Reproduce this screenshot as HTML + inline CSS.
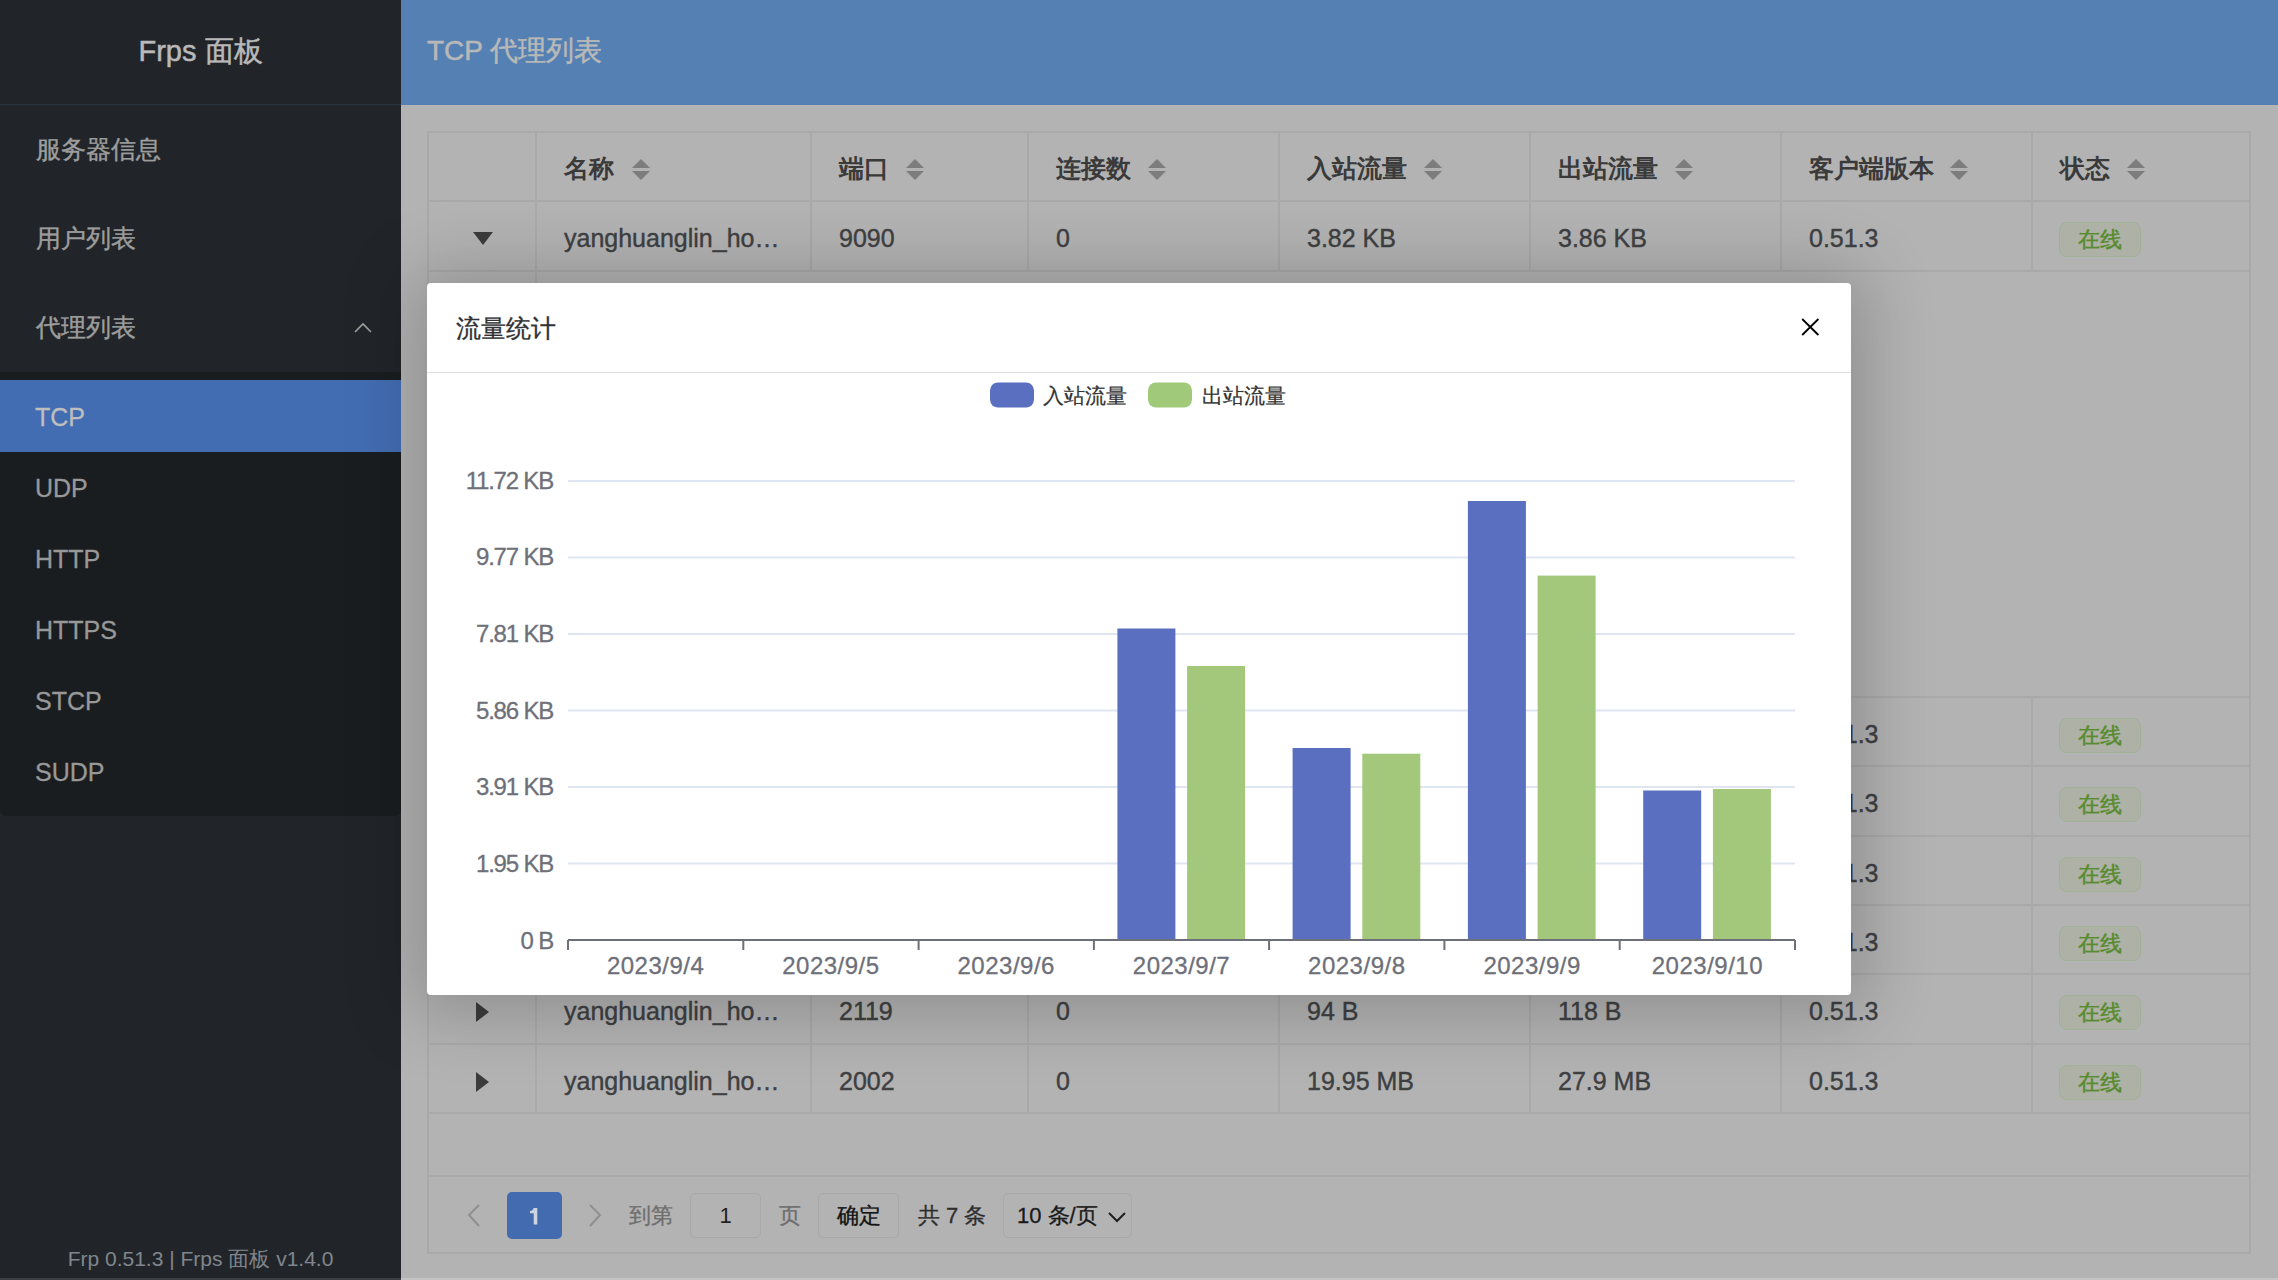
<!DOCTYPE html>
<html><head><meta charset="utf-8">
<style>
*{box-sizing:border-box;margin:0;padding:0}
html,body{width:2278px;height:1280px;overflow:hidden;background:#b3b3b3;font-family:"Liberation Sans",sans-serif}
.abs{position:absolute}
#side{left:0;top:0;width:401px;height:1280px;background:#212529}
#logo{left:0;top:0;width:401px;height:105px;border-bottom:1px solid #283440;color:#b9b9b9;font-size:29px;text-align:center;line-height:102px;-webkit-text-stroke:0.5px #b9b9b9}
.mi{left:36px;color:#9d9d9d;font-size:25px;line-height:30px;-webkit-text-stroke:0.4px #9d9d9d}
#sub{left:0;top:372px;width:401px;height:444px;background:#1a1d20;border-radius:0 0 6px 6px}
#act{left:0;top:380px;width:401px;height:72px;background:#436db3}
.si{left:35px;color:#989898;font-size:25px;line-height:30px;-webkit-text-stroke:0.3px currentColor}
#foot{left:0;top:1244px;width:401px;text-align:center;color:#80858d;font-size:21px;line-height:30px}
#hdr{left:401px;top:0;width:1877px;height:105px;background:#5580b3;color:#b8b8b8;font-size:28px;line-height:102px;-webkit-text-stroke:0.5px #b8b8b8;padding-left:26px}
#tbl{left:427px;top:131px;width:1824px;height:1123px;border:2px solid #a9a9a9}
.hl{height:2px;background:#a9a9a9;left:427px;width:1824px}
.vl{width:2px;background:#a9a9a9}
.th{color:#3a3a3a;font-weight:bold;font-size:25px;line-height:30px}
.td{color:#3e4042;font-size:25px;line-height:30px;-webkit-text-stroke:0.4px #3e4042}
.tag{width:82px;height:35px;border:1.5px solid #a1b197;background:#adb1a6;border-radius:8px;color:#578b2e;font-size:22px;line-height:34px;-webkit-text-stroke:0.4px #578b2e;text-align:center}
#modal{left:427px;top:283px;width:1424px;height:712px;background:#fff;border-radius:4px;box-shadow:0 4px 70px 16px rgba(0,0,0,.2)}
.sort{width:18px;height:22px}
.sort i{position:absolute;left:0;width:0;height:0;border-left:9px solid transparent;border-right:9px solid transparent}
.sort .up{top:0;border-bottom:9px solid #7d7d7d}
.sort .dn{top:12px;border-top:9px solid #7d7d7d}
.tri-d{width:0;height:0;border-left:10px solid transparent;border-right:10px solid transparent;border-top:13px solid #3c3c3c}
.tri-r{width:0;height:0;border-top:10px solid transparent;border-bottom:10px solid transparent;border-left:13px solid #3c3c3c}
.mtitle{color:#303133;font-size:25px;line-height:30px;-webkit-text-stroke:0.3px #303133}
.lg{font-size:21px;fill:#333;stroke:#333;stroke-width:0.2px}
.pg{font-size:22px;line-height:30px;-webkit-text-stroke:0.3px currentColor}
.ax{font-size:24px;fill:#6e7079;stroke:#6e7079;stroke-width:0.3px;font-family:"Liberation Sans",sans-serif}
.ay{letter-spacing:-1.2px}
.axx{letter-spacing:0.5px}
</style></head>
<body>
<div id="side" class="abs"></div>
<div id="logo" class="abs">Frps 面板</div>
<div class="abs mi" style="top:134px">服务器信息</div>
<div class="abs mi" style="top:223px">用户列表</div>
<div class="abs mi" style="top:312px">代理列表</div>
<div id="sub" class="abs"></div>
<div id="act" class="abs"></div>
<div class="abs si" style="top:402px;color:#bebebe">TCP</div>
<div class="abs si" style="top:473px">UDP</div>
<div class="abs si" style="top:544px">HTTP</div>
<div class="abs si" style="top:615px">HTTPS</div>
<div class="abs si" style="top:686px">STCP</div>
<div class="abs si" style="top:757px">SUDP</div>
<div id="foot" class="abs">Frp 0.51.3 | Frps 面板 v1.4.0</div>
<div id="hdr" class="abs">TCP 代理列表</div>

<div id="tbl" class="abs"></div>
<div class="abs hl" style="top:200px"></div>
<div class="abs hl" style="top:270px"></div>
<div class="abs hl" style="top:696px"></div>
<div class="abs hl" style="top:765px"></div>
<div class="abs hl" style="top:835px"></div>
<div class="abs hl" style="top:904px"></div>
<div class="abs hl" style="top:973px"></div>
<div class="abs hl" style="top:1043px"></div>
<div class="abs hl" style="top:1112px"></div>
<div class="abs hl" style="top:1175px"></div>
<div class="abs vl" style="left:535px;top:132px;height:140px"></div>
<div class="abs vl" style="left:535px;top:697px;height:417px"></div>
<div class="abs vl" style="left:810px;top:132px;height:140px"></div>
<div class="abs vl" style="left:810px;top:697px;height:417px"></div>
<div class="abs vl" style="left:1027px;top:132px;height:140px"></div>
<div class="abs vl" style="left:1027px;top:697px;height:417px"></div>
<div class="abs vl" style="left:1278px;top:132px;height:140px"></div>
<div class="abs vl" style="left:1278px;top:697px;height:417px"></div>
<div class="abs vl" style="left:1529px;top:132px;height:140px"></div>
<div class="abs vl" style="left:1529px;top:697px;height:417px"></div>
<div class="abs vl" style="left:1780px;top:132px;height:140px"></div>
<div class="abs vl" style="left:1780px;top:697px;height:417px"></div>
<div class="abs vl" style="left:2031px;top:132px;height:140px"></div>
<div class="abs vl" style="left:2031px;top:697px;height:417px"></div>
<div class="abs vl" style="left:535px;top:270px;height:427px"></div>
<div class="abs th" style="left:564px;top:153px">名称</div>
<div class="abs sort" style="left:632px;top:159px"><i class="up"></i><i class="dn"></i></div>
<div class="abs th" style="left:839px;top:153px">端口</div>
<div class="abs sort" style="left:906px;top:159px"><i class="up"></i><i class="dn"></i></div>
<div class="abs th" style="left:1056px;top:153px">连接数</div>
<div class="abs sort" style="left:1148px;top:159px"><i class="up"></i><i class="dn"></i></div>
<div class="abs th" style="left:1307px;top:153px">入站流量</div>
<div class="abs sort" style="left:1424px;top:159px"><i class="up"></i><i class="dn"></i></div>
<div class="abs th" style="left:1558px;top:153px">出站流量</div>
<div class="abs sort" style="left:1675px;top:159px"><i class="up"></i><i class="dn"></i></div>
<div class="abs th" style="left:1809px;top:153px">客户端版本</div>
<div class="abs sort" style="left:1950px;top:159px"><i class="up"></i><i class="dn"></i></div>
<div class="abs th" style="left:2060px;top:153px">状态</div>
<div class="abs sort" style="left:2127px;top:159px"><i class="up"></i><i class="dn"></i></div>
<div class="abs tri-d" style="left:473px;top:232px"></div>
<div class="abs td" style="left:564px;top:223px">yanghuanglin_ho…</div>
<div class="abs td" style="left:839px;top:223px">9090</div>
<div class="abs td" style="left:1056px;top:223px">0</div>
<div class="abs td" style="left:1307px;top:223px">3.82 KB</div>
<div class="abs td" style="left:1558px;top:223px">3.86 KB</div>
<div class="abs td" style="left:1809px;top:223px">0.51.3</div>
<div class="abs tag" style="left:2059px;top:222px">在线</div>
<div class="abs tri-r" style="left:476px;top:725px"></div>
<div class="abs td" style="left:564px;top:719px">yanghuanglin_ho…</div>
<div class="abs td" style="left:839px;top:719px">8080</div>
<div class="abs td" style="left:1056px;top:719px">0</div>
<div class="abs td" style="left:1307px;top:719px">1.2 KB</div>
<div class="abs td" style="left:1558px;top:719px">1.3 KB</div>
<div class="abs td" style="left:1809px;top:719px">0.51.3</div>
<div class="abs tag" style="left:2059px;top:718px">在线</div>
<div class="abs tri-r" style="left:476px;top:794px"></div>
<div class="abs td" style="left:564px;top:788px">yanghuanglin_ho…</div>
<div class="abs td" style="left:839px;top:788px">8081</div>
<div class="abs td" style="left:1056px;top:788px">0</div>
<div class="abs td" style="left:1307px;top:788px">1.2 KB</div>
<div class="abs td" style="left:1558px;top:788px">1.3 KB</div>
<div class="abs td" style="left:1809px;top:788px">0.51.3</div>
<div class="abs tag" style="left:2059px;top:787px">在线</div>
<div class="abs tri-r" style="left:476px;top:864px"></div>
<div class="abs td" style="left:564px;top:858px">yanghuanglin_ho…</div>
<div class="abs td" style="left:839px;top:858px">8082</div>
<div class="abs td" style="left:1056px;top:858px">0</div>
<div class="abs td" style="left:1307px;top:858px">1.2 KB</div>
<div class="abs td" style="left:1558px;top:858px">1.3 KB</div>
<div class="abs td" style="left:1809px;top:858px">0.51.3</div>
<div class="abs tag" style="left:2059px;top:857px">在线</div>
<div class="abs tri-r" style="left:476px;top:933px"></div>
<div class="abs td" style="left:564px;top:927px">yanghuanglin_ho…</div>
<div class="abs td" style="left:839px;top:927px">8083</div>
<div class="abs td" style="left:1056px;top:927px">0</div>
<div class="abs td" style="left:1307px;top:927px">1.2 KB</div>
<div class="abs td" style="left:1558px;top:927px">1.3 KB</div>
<div class="abs td" style="left:1809px;top:927px">0.51.3</div>
<div class="abs tag" style="left:2059px;top:926px">在线</div>
<div class="abs tri-r" style="left:476px;top:1002px"></div>
<div class="abs td" style="left:564px;top:996px">yanghuanglin_ho…</div>
<div class="abs td" style="left:839px;top:996px">2119</div>
<div class="abs td" style="left:1056px;top:996px">0</div>
<div class="abs td" style="left:1307px;top:996px">94 B</div>
<div class="abs td" style="left:1558px;top:996px">118 B</div>
<div class="abs td" style="left:1809px;top:996px">0.51.3</div>
<div class="abs tag" style="left:2059px;top:995px">在线</div>
<div class="abs tri-r" style="left:476px;top:1072px"></div>
<div class="abs td" style="left:564px;top:1066px">yanghuanglin_ho…</div>
<div class="abs td" style="left:839px;top:1066px">2002</div>
<div class="abs td" style="left:1056px;top:1066px">0</div>
<div class="abs td" style="left:1307px;top:1066px">19.95 MB</div>
<div class="abs td" style="left:1558px;top:1066px">27.9 MB</div>
<div class="abs td" style="left:1809px;top:1066px">0.51.3</div>
<div class="abs tag" style="left:2059px;top:1065px">在线</div>
<svg class="abs" style="left:461px;top:1195px" width="30" height="40"><path d="M18 10 L8 20 L18 31" stroke="#8f8f8f" stroke-width="2" fill="none"/></svg>
<div class="abs" style="left:507px;top:1192px;width:55px;height:47px;background:#436bb0;border-radius:5px"></div>
<svg class="abs" style="left:0;top:0;width:1px;height:1px;overflow:visible"><path d="M533.6 1207.9 L537.3 1207.9 L537.3 1224.4 L533.7 1224.4 L533.7 1213.3 L530 1213.3 L530 1210.9 Q533.2 1210.6 533.6 1207.9 Z" fill="#cdd4df"/></svg>
<svg class="abs" style="left:580px;top:1195px" width="30" height="40"><path d="M10 10 L20 20 L10 31" stroke="#8f8f8f" stroke-width="2" fill="none"/></svg>
<div class="abs pg" style="left:629px;top:1201px;color:#6e6e6e">到第</div>
<div class="abs" style="left:690px;top:1193px;width:71px;height:45px;border:1.5px solid #a9a9a9;border-radius:5px;color:#222;font-size:22px;line-height:43px;text-align:center">1</div>
<div class="abs pg" style="left:779px;top:1201px;color:#6e6e6e">页</div>
<div class="abs" style="left:818px;top:1193px;width:81px;height:45px;border:1.5px solid #a9a9a9;border-radius:5px;color:#141414;font-size:22px;line-height:43px;text-align:center;-webkit-text-stroke:0.35px #141414">确定</div>
<div class="abs pg" style="left:918px;top:1201px;color:#2e2e2e">共 7 条</div>
<div class="abs" style="left:1003px;top:1193px;width:129px;height:45px;border:1.5px solid #a9a9a9;border-radius:5px"></div>
<div class="abs pg" style="left:1017px;top:1201px;color:#1a1a1a">10 条/页</div>
<svg class="abs" style="left:1105px;top:1205px" width="24" height="24"><path d="M4 8 L12 16 L20 8" stroke="#1e1e1e" stroke-width="2" fill="none"/></svg>
<svg class="abs" style="left:350px;top:315px" width="26" height="24"><path d="M5 17 L13 9 L21 17" stroke="#a0a0a0" stroke-width="1.6" fill="none"/></svg>

<!-- MODAL -->
<div id="modal" class="abs"></div>
<div class="abs" style="left:427px;top:372px;width:1424px;height:1px;background:#e0e0e0"></div>
<div class="abs mtitle" style="left:456px;top:313px">流量统计</div>
<svg class="abs" style="left:0;top:0" width="2278" height="1280">
<path d="M1802.2 319 L1818.4 335 M1818.4 319 L1802.2 335" stroke="#000" stroke-width="1.8" fill="none"/>
<rect x="990" y="382.5" width="44" height="25" rx="8" fill="#5b6fc1"/>
<rect x="1148" y="382.5" width="44" height="25" rx="8" fill="#a1c97a"/>
<text x="1043" y="403" class="lg">入站流量</text>
<text x="1202" y="403" class="lg">出站流量</text>
<line x1="568" y1="481.0" x2="1795" y2="481.0" stroke="#e0e6f1" stroke-width="2"/>
<text x="553" y="488.5" class="ax ay" text-anchor="end">11.72 KB</text>
<line x1="568" y1="557.5" x2="1795" y2="557.5" stroke="#e0e6f1" stroke-width="2"/>
<text x="553" y="565.2" class="ax ay" text-anchor="end">9.77 KB</text>
<line x1="568" y1="634.0" x2="1795" y2="634.0" stroke="#e0e6f1" stroke-width="2"/>
<text x="553" y="641.8" class="ax ay" text-anchor="end">7.81 KB</text>
<line x1="568" y1="710.5" x2="1795" y2="710.5" stroke="#e0e6f1" stroke-width="2"/>
<text x="553" y="718.5" class="ax ay" text-anchor="end">5.86 KB</text>
<line x1="568" y1="787.0" x2="1795" y2="787.0" stroke="#e0e6f1" stroke-width="2"/>
<text x="553" y="795.2" class="ax ay" text-anchor="end">3.91 KB</text>
<line x1="568" y1="863.5" x2="1795" y2="863.5" stroke="#e0e6f1" stroke-width="2"/>
<text x="553" y="871.8" class="ax ay" text-anchor="end">1.95 KB</text>
<text x="553" y="948.5" class="ax ay" text-anchor="end">0 B</text>
<rect x="1117.4" y="628.5" width="58" height="311.5" fill="#5b6fc1"/>
<rect x="1187.1" y="666" width="58" height="274" fill="#a3c87b"/>
<rect x="1292.6" y="748" width="58" height="192" fill="#5b6fc1"/>
<rect x="1362.3" y="753.7" width="58" height="186.29999999999995" fill="#a3c87b"/>
<rect x="1467.9" y="501" width="58" height="439" fill="#5b6fc1"/>
<rect x="1537.6" y="575.6" width="58" height="364.4" fill="#a3c87b"/>
<rect x="1643.2" y="790.5" width="58" height="149.5" fill="#5b6fc1"/>
<rect x="1712.9" y="789" width="58" height="151" fill="#a3c87b"/>
<line x1="568" y1="940" x2="1795" y2="940" stroke="#6e7079" stroke-width="2"/>
<line x1="568.0" y1="940" x2="568.0" y2="950" stroke="#6e7079" stroke-width="2"/>
<line x1="743.3" y1="940" x2="743.3" y2="950" stroke="#6e7079" stroke-width="2"/>
<line x1="918.6" y1="940" x2="918.6" y2="950" stroke="#6e7079" stroke-width="2"/>
<line x1="1093.9" y1="940" x2="1093.9" y2="950" stroke="#6e7079" stroke-width="2"/>
<line x1="1269.1" y1="940" x2="1269.1" y2="950" stroke="#6e7079" stroke-width="2"/>
<line x1="1444.4" y1="940" x2="1444.4" y2="950" stroke="#6e7079" stroke-width="2"/>
<line x1="1619.7" y1="940" x2="1619.7" y2="950" stroke="#6e7079" stroke-width="2"/>
<line x1="1795.0" y1="940" x2="1795.0" y2="950" stroke="#6e7079" stroke-width="2"/>
<text x="655.6" y="974" class="ax axx" text-anchor="middle">2023/9/4</text>
<text x="830.9" y="974" class="ax axx" text-anchor="middle">2023/9/5</text>
<text x="1006.2" y="974" class="ax axx" text-anchor="middle">2023/9/6</text>
<text x="1181.5" y="974" class="ax axx" text-anchor="middle">2023/9/7</text>
<text x="1356.8" y="974" class="ax axx" text-anchor="middle">2023/9/8</text>
<text x="1532.1" y="974" class="ax axx" text-anchor="middle">2023/9/9</text>
<text x="1707.4" y="974" class="ax axx" text-anchor="middle">2023/9/10</text>
</svg>
<div class="abs" style="left:0;top:1278px;width:401px;height:2px;background:#3b3e42"></div>
<div class="abs" style="left:401px;top:1278px;width:1877px;height:2px;background:#c4c4c4"></div>
</body></html>
